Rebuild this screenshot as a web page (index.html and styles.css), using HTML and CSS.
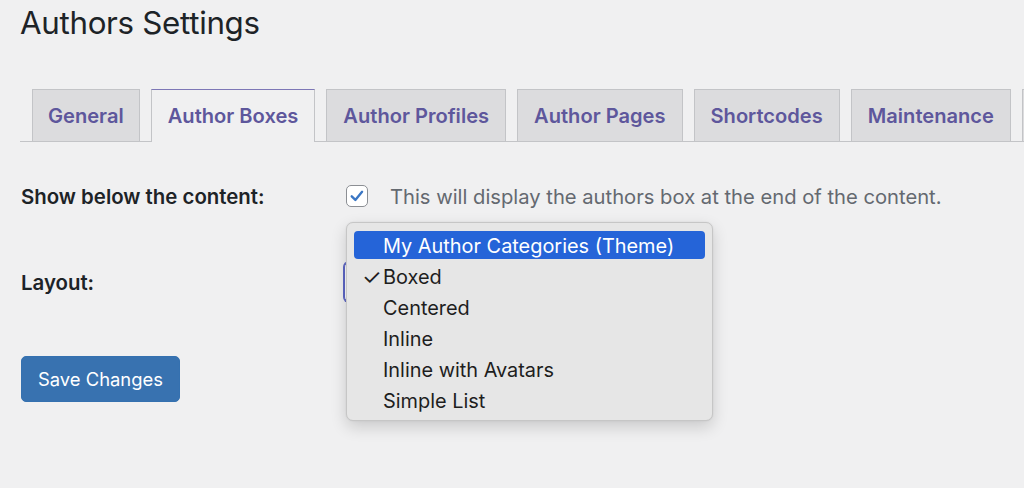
FILE: index.html
```html
<!DOCTYPE html>
<html lang="en">
<head>
<meta charset="utf-8">
<title>Authors Settings</title>
<link rel="stylesheet" href="styles.css">
</head>
<body>
<div class="wrap">
  <h1 class="page-title">Authors Settings</h1>

  <nav class="nav-tabs">
    <a class="nav-tab">General</a>
    <a class="nav-tab is-active">Author Boxes</a>
    <a class="nav-tab">Author Profiles</a>
    <a class="nav-tab">Author Pages</a>
    <a class="nav-tab">Shortcodes</a>
    <a class="nav-tab">Maintenance</a>
    <a class="nav-tab nav-tab-more">Advanced</a>
  </nav>

  <form class="settings-form">
    <div class="form-row">
      <div class="form-label">Show below the content:</div>
      <div class="form-field">
        <span class="checkbox">
          <svg viewBox="0 0 22 22" width="22" height="22" aria-hidden="true">
            <path d="M5.2 11.4 L9.2 15.3 L16.6 6.4" fill="none" stroke="#3a76c4" stroke-width="2.6" stroke-linecap="round" stroke-linejoin="round"/>
          </svg>
        </span>
        <span class="description">This will display the authors box at the end of the content.</span>
      </div>
    </div>

    <div class="form-row">
      <div class="form-label">Layout:</div>
      <div class="form-field">
        <div class="select-wrap">
          <div class="select-box"></div>
          <ul class="select-menu">
            <li class="menu-item is-highlighted"><span class="check"></span>My Author Categories (Theme)</li>
            <li class="menu-item"><span class="check">✓</span>Boxed</li>
            <li class="menu-item"><span class="check"></span>Centered</li>
            <li class="menu-item"><span class="check"></span>Inline</li>
            <li class="menu-item"><span class="check"></span>Inline with Avatars</li>
            <li class="menu-item"><span class="check"></span>Simple List</li>
          </ul>
        </div>
      </div>
    </div>

    <div class="form-actions">
      <button type="button" class="button-primary">Save Changes</button>
    </div>
  </form>
</div>
</body>
</html>
```

FILE: styles.css
```css
html, body {
  margin: 0;
  padding: 0;
}

body {
  background: #f0f0f1;
  color: #1d2327;
  font-family: Inter, "Liberation Sans", Arial, sans-serif;
  overflow: hidden;
  height: 488px;
}

.wrap {
  padding-left: 20px;
}

.page-title {
  margin: 0;
  padding-top: 2px;
  font-size: 31.3px;
  font-weight: 400;
  line-height: 42px;
  color: #1d2327;
  letter-spacing: -0.3px;
}

/* Tab strip */
.nav-tabs {
  display: flex;
  gap: 11px;
  margin-top: 45px;
  padding-left: 12px;
  border-bottom: 1px solid #c3c4c7;
  height: 52px;
  white-space: nowrap;
}

.nav-tab {
  display: flex;
  align-items: center;
  flex: none;
  height: 51px;
  padding: 0 16px;
  border: 1px solid #c3c4c7;
  border-bottom: none;
  background: #dcdcde;
  color: #5e579c;
  font-size: 20.1px;
  font-weight: 600;
  cursor: pointer;
}

.nav-tab:first-child {
  padding: 0 15px;
}

.nav-tab.is-active {
  background: #f0f0f1;
  border-top-color: #7d77b6;
  height: 52px;
  position: relative;
  z-index: 1;
}

/* Form */
.settings-form {
  margin-top: 11px;
}

.form-row {
  display: grid;
  grid-template-columns: 324px 1fr;
  align-items: center;
  height: 86px;
}

.form-label {
  padding-left: 1px;
  font-size: 20.4px;
  font-weight: 600;
  color: #1d2327;
}

.form-field {
  display: flex;
  align-items: center;
}

.checkbox {
  display: inline-flex;
  width: 20px;
  height: 20px;
  margin-left: 2px;
  border: 1px solid #8c8f94;
  border-radius: 5px;
  background: #fff;
  align-items: center;
  justify-content: center;
}

.checkbox svg {
  display: block;
}

.description {
  margin-left: 22px;
  font-size: 20.2px;
  color: #646970;
}

/* Native select with its open popup list */
.select-wrap {
  position: relative;
}

.select-box {
  width: 320px;
  height: 38px;
  border: 1px solid #5d66c4;
  border-radius: 5px;
  background: #fff;
  box-shadow: 0 0 0 1px #5d66c4;
}

.select-menu {
  position: absolute;
  left: 2px;
  top: -40px;
  width: 351px;
  margin: 0;
  padding: 8px 7px 6px;
  list-style: none;
  background: #e6e6e6;
  border: 1px solid #c6c6c6;
  border-radius: 7px;
  box-shadow: 0 6px 16px rgba(0, 0, 0, 0.16), 0 0 2px rgba(0, 0, 0, 0.08);
  z-index: 5;
}

.menu-item {
  display: flex;
  align-items: center;
  height: 28px;
  padding-top: 1px;
  box-sizing: border-box;
  padding-left: 8px;
  border-radius: 4px;
  font-size: 19.9px;
  color: #1e1e1e;
  white-space: nowrap;
}

.menu-item + .menu-item {
  margin-top: 3px;
}

.menu-item.is-highlighted {
  background: #2564d8;
  color: #ffffff;
}

.check {
  display: inline-block;
  width: 21px;
  font-size: 22px;
  line-height: 1;
}

.form-actions {
  margin-top: 31px;
}

.button-primary {
  height: 46px;
  padding: 0 16px;
  margin-left: 1px;
  border: 1px solid #3571b0;
  border-radius: 5px;
  background: #3872b0;
  color: #fff;
  font-family: Inter, "Liberation Sans", Arial, sans-serif;
  font-size: 18.4px;
  cursor: pointer;
}
```
